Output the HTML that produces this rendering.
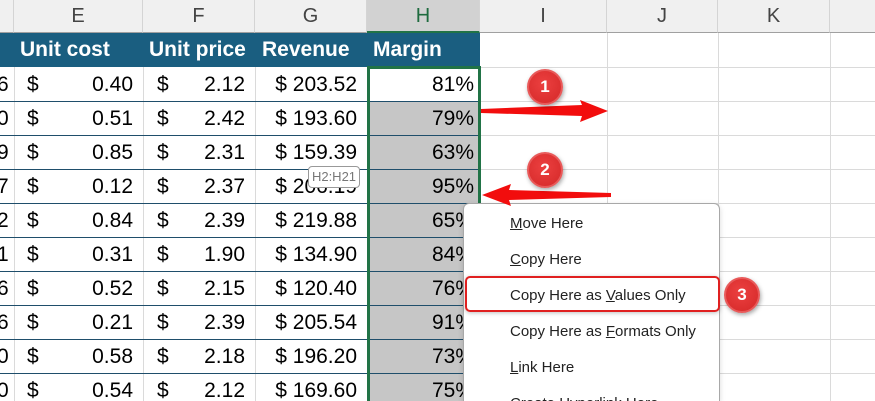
<!DOCTYPE html>
<html><head><meta charset="utf-8"><style>
*{margin:0;padding:0;box-sizing:border-box}
html{width:875px;height:401px;overflow:hidden}
body{width:875px;height:401px;overflow:hidden;background:#fff;position:relative;font-family:"Liberation Sans",sans-serif}
.a{position:absolute}
.ch{position:absolute;top:0;height:33px;background:#f0f0f0;border-right:1px solid #d4d4d4;border-bottom:1px solid #a0a0a0;color:#444;font-size:20px;text-align:center;line-height:33px}
.vl{position:absolute;top:33px;height:368px;width:1px;background:#dadada}
.hl{position:absolute;left:480px;width:395px;height:1px;background:#dadada}
.tl{position:absolute;left:0;width:480px;height:1px;background:#1f4e6b}
.c{position:absolute;font-size:21px;color:#000;line-height:34px;height:34px}
.hd{position:absolute;top:33px;height:34px;background:#1a5e80;color:#fff;font-weight:bold;font-size:21px;line-height:34px}
.mi{position:absolute;left:510px;font-size:15px;color:#222}
.b{position:absolute;width:36px;height:36px;border-radius:50%;background:radial-gradient(circle at 45% 40%,#ec4040,#d42828);border:2px solid #e85a5a;color:#fff;font-weight:bold;font-size:17px;text-align:center;line-height:32px;box-shadow:1px 2px 4px rgba(0,0,0,.35)}
</style></head><body>
<div class="ch" style="left:0;width:14px"></div>
<div class="ch" style="left:14px;width:129px">E</div>
<div class="ch" style="left:143px;width:112px">F</div>
<div class="ch" style="left:255px;width:112px">G</div>
<div class="ch" style="left:367px;width:113px;background:#d2d2d2;color:#1e6b3e;border-bottom:2px solid #217346">H</div>
<div class="ch" style="left:480px;width:127px">I</div>
<div class="ch" style="left:607px;width:111px">J</div>
<div class="ch" style="left:718px;width:112px">K</div>
<div class="ch" style="left:830px;width:45px;border-right:none"></div>

<div class="hd" style="left:0;width:480px"></div>
<div class="hd" style="left:20px;background:none">Unit cost</div>
<div class="hd" style="left:149px;background:none">Unit price</div>
<div class="hd" style="left:262px;background:none">Revenue</div>
<div class="hd" style="left:373px;background:none">Margin</div>

<div class="a" style="left:368px;top:101px;width:111px;height:300px;background:#c6c6c6"></div>

<div class="vl" style="left:14px;top:67px;height:334px"></div>
<div class="vl" style="left:143px;top:67px;height:334px"></div>
<div class="vl" style="left:255px;top:67px;height:334px"></div>
<div class="vl" style="left:607px"></div>
<div class="vl" style="left:718px"></div>
<div class="vl" style="left:830px"></div>
<div class="hl" style="top:67px"></div><div class="hl" style="top:101px"></div><div class="hl" style="top:135px"></div><div class="hl" style="top:169px"></div><div class="hl" style="top:203px"></div><div class="hl" style="top:237px"></div><div class="hl" style="top:271px"></div><div class="hl" style="top:305px"></div><div class="hl" style="top:339px"></div><div class="hl" style="top:373px"></div>
<div class="tl" style="top:101px"></div><div class="tl" style="top:135px"></div><div class="tl" style="top:169px"></div><div class="tl" style="top:203px"></div><div class="tl" style="top:237px"></div><div class="tl" style="top:271px"></div><div class="tl" style="top:305px"></div><div class="tl" style="top:339px"></div><div class="tl" style="top:373px"></div>

<div class="a" style="left:0;top:68px;width:480px;height:333px;overflow:hidden">
<div class="c" style="top:0;left:-3px">6</div><div class="c" style="top:0;left:27px">$</div><div class="c" style="top:0;right:347px">0.40</div><div class="c" style="top:0;left:157px">$</div><div class="c" style="top:0;right:235px">2.12</div><div class="c" style="top:0;right:123px">$ 203.52</div><div class="c" style="top:0;right:6px">81%</div>
<div class="c" style="top:34px;left:-3px">0</div><div class="c" style="top:34px;left:27px">$</div><div class="c" style="top:34px;right:347px">0.51</div><div class="c" style="top:34px;left:157px">$</div><div class="c" style="top:34px;right:235px">2.42</div><div class="c" style="top:34px;right:123px">$ 193.60</div><div class="c" style="top:34px;right:6px">79%</div>
<div class="c" style="top:68px;left:-3px">9</div><div class="c" style="top:68px;left:27px">$</div><div class="c" style="top:68px;right:347px">0.85</div><div class="c" style="top:68px;left:157px">$</div><div class="c" style="top:68px;right:235px">2.31</div><div class="c" style="top:68px;right:123px">$ 159.39</div><div class="c" style="top:68px;right:6px">63%</div>
<div class="c" style="top:102px;left:-3px">7</div><div class="c" style="top:102px;left:27px">$</div><div class="c" style="top:102px;right:347px">0.12</div><div class="c" style="top:102px;left:157px">$</div><div class="c" style="top:102px;right:235px">2.37</div><div class="c" style="top:102px;right:123px">$ 206.19</div><div class="c" style="top:102px;right:6px">95%</div>
<div class="c" style="top:136px;left:-3px">2</div><div class="c" style="top:136px;left:27px">$</div><div class="c" style="top:136px;right:347px">0.84</div><div class="c" style="top:136px;left:157px">$</div><div class="c" style="top:136px;right:235px">2.39</div><div class="c" style="top:136px;right:123px">$ 219.88</div><div class="c" style="top:136px;right:6px">65%</div>
<div class="c" style="top:170px;left:-3px">1</div><div class="c" style="top:170px;left:27px">$</div><div class="c" style="top:170px;right:347px">0.31</div><div class="c" style="top:170px;left:157px">$</div><div class="c" style="top:170px;right:235px">1.90</div><div class="c" style="top:170px;right:123px">$ 134.90</div><div class="c" style="top:170px;right:6px">84%</div>
<div class="c" style="top:204px;left:-3px">6</div><div class="c" style="top:204px;left:27px">$</div><div class="c" style="top:204px;right:347px">0.52</div><div class="c" style="top:204px;left:157px">$</div><div class="c" style="top:204px;right:235px">2.15</div><div class="c" style="top:204px;right:123px">$ 120.40</div><div class="c" style="top:204px;right:6px">76%</div>
<div class="c" style="top:238px;left:-3px">6</div><div class="c" style="top:238px;left:27px">$</div><div class="c" style="top:238px;right:347px">0.21</div><div class="c" style="top:238px;left:157px">$</div><div class="c" style="top:238px;right:235px">2.39</div><div class="c" style="top:238px;right:123px">$ 205.54</div><div class="c" style="top:238px;right:6px">91%</div>
<div class="c" style="top:272px;left:-3px">0</div><div class="c" style="top:272px;left:27px">$</div><div class="c" style="top:272px;right:347px">0.58</div><div class="c" style="top:272px;left:157px">$</div><div class="c" style="top:272px;right:235px">2.18</div><div class="c" style="top:272px;right:123px">$ 196.20</div><div class="c" style="top:272px;right:6px">73%</div>
<div class="c" style="top:306px;left:-3px">0</div><div class="c" style="top:306px;left:27px">$</div><div class="c" style="top:306px;right:347px">0.54</div><div class="c" style="top:306px;left:157px">$</div><div class="c" style="top:306px;right:235px">2.12</div><div class="c" style="top:306px;right:123px">$ 169.60</div><div class="c" style="top:306px;right:6px">75%</div>
</div>

<div class="a" style="left:367px;top:67px;width:3px;height:334px;background:#217346"></div>
<div class="a" style="left:478px;top:67px;width:3px;height:334px;background:#217346"></div>
<div class="a" style="left:367px;top:66px;width:114px;height:3px;background:#217346"></div>

<div class="a" style="left:308px;top:166px;width:52px;height:22px;background:#fff;border:1px solid #999;border-radius:4px;font-size:13px;color:#777;line-height:20px;text-align:center">H2:H21</div>

<div class="a" style="left:463px;top:203px;width:257px;height:198px;background:#fff;border:1px solid #a8a8a8;border-bottom:none;border-radius:6px 6px 0 0;box-shadow:0 2px 6px rgba(0,0,0,.15);overflow:hidden"></div>
<div class="mi" style="top:215px"><u>M</u>ove Here</div>
<div class="mi" style="top:251px"><u>C</u>opy Here</div>
<div class="mi" style="top:287px">Copy Here as <u>V</u>alues Only</div>
<div class="mi" style="top:323px">Copy Here as <u>F</u>ormats Only</div>
<div class="mi" style="top:359px"><u>L</u>ink Here</div>
<div class="mi" style="top:395px">Create <u>H</u>yperlink Here</div>
<div class="a" style="left:465px;top:276px;width:255px;height:36px;border:2px solid #e02020;border-radius:5px;box-shadow:0 1px 4px rgba(0,0,0,.25)"></div>

<svg class="a" style="left:0;top:0" width="875" height="401">
<polygon points="481,109 582,105 580,100 608,111 580,122 582,116 481,113" fill="#f20d0d"/>
<polygon points="482,195 511,184 509,190 611,193 611,197 509,200 511,206" fill="#f20d0d"/>
</svg>
<div class="b" style="left:527px;top:69px">1</div>
<div class="b" style="left:527px;top:152px">2</div>
<div class="b" style="left:724px;top:277px">3</div>
</body></html>
